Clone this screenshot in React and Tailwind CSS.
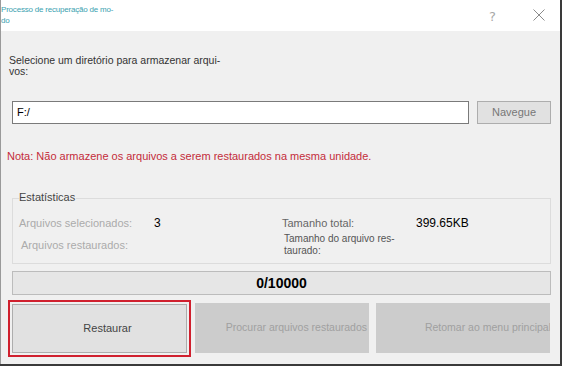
import React from "react";

export default function App() {
  return (
    <div className="w-[562px] h-[366px] bg-[#3a3a3a] font-['Liberation_Sans',Arial,sans-serif]">
      <div className="w-[560px] h-[364px] bg-[#f0f0f0] border-l border-[#9a9a9a] flex flex-col">
        {/* title bar */}
        <div className="h-[31px] bg-white flex items-start relative">
          <div className="pt-[4px] text-[8px] leading-[11px] text-[#3b9fb0] tracking-[-0.2px]">
            <div>Processo de recuperação de mo-</div>
            <div>do</div>
          </div>
          <span className="absolute left-[488px] top-[7px] text-[13px] text-[#a8a8a8] font-['DejaVu_Sans',sans-serif]">?</span>
          <svg className="absolute left-[532px] top-[9px]" width="12" height="12" viewBox="0 0 12 12">
            <path d="M0.5 0.5 L11.5 11.5 M11.5 0.5 L0.5 11.5" stroke="#8a8a8a" strokeWidth="1" fill="none" />
          </svg>
        </div>

        {/* directory */}
        <div className="mt-[24px] pl-[8px] text-[10.5px] leading-[11px] text-[#333]">
          <div>Selecione um diretório para armazenar arqui-</div>
          <div>vos:</div>
        </div>

        <div className="mt-[24px] flex pl-[11px] gap-[8px]">
          <div className="w-[457px] h-[23px] bg-white border border-[#7a7a7a] flex items-center pl-[4px] text-[11px] text-black">
            F:/
          </div>
          <div className="w-[74px] h-[23px] bg-[#e1e1e1] border border-[#adadad] flex items-center justify-center text-[11px] text-[#777]">
            Navegue
          </div>
        </div>

        <div className="mt-[26px] pl-[6px] text-[11px] leading-[12px] text-[#c42c3a]">
          Nota: Não armazene os arquivos a serem restaurados na mesma unidade.
        </div>

        {/* stats group */}
        <div className="mt-[29px] ml-[11px] w-[539px] relative">
          <div className="text-[11px] leading-[12px] text-[#444] pl-[7px] relative z-10">
            <span className="bg-[#f0f0f0] pr-[1px]">Estatísticas</span>
          </div>
          <div className="-mt-[5px] h-[66px] border border-[#dcdcdc] text-[11px]">
            <div className="flex items-center h-[12px] mt-[18px]">
              <span className="w-[141px] pl-[6px] text-[#ababab]">Arquivos selecionados:</span>
              <span className="w-[128px] text-black text-[12px]">3</span>
              <span className="w-[134px] text-[#666]">Tamanho total:</span>
              <span className="text-black text-[12px]">399.65KB</span>
            </div>
            <div className="flex items-center h-[24px] mt-[4px]">
              <span className="w-[271px] pl-[8px] text-[#ababab]">Arquivos restaurados:</span>
              <span className="text-[10px] leading-[12px] text-[#555]">
                <div>Tamanho do arquivo res-</div>
                <div>taurado:</div>
              </span>
            </div>
          </div>
        </div>

        {/* progress */}
        <div className="mt-[7px] ml-[11px] w-[539px] h-[24px] bg-[#e6e6e6] border border-[#bcbcbc] flex items-center justify-center text-[14px] font-bold text-black">
          0/10000
        </div>

        {/* buttons */}
        <div className="mt-[5px] flex ml-[7px]">
          <div className="w-[183px] h-[57px] border-2 border-[#d0202e] p-[2px]">
            <div className="w-full h-full bg-[#e1e1e1] border border-[#adadad] flex items-center justify-center pl-[16px] text-[11px] text-[#444]">
              Restaurar
            </div>
          </div>
          <div className="ml-[4px] mt-[3px] w-[174px] h-[50px] bg-[#cccccc] overflow-hidden flex items-center justify-end pr-[2px] text-[10.5px] text-[#a0a0a0] whitespace-nowrap">
            Procurar arquivos restaurados
          </div>
          <div className="ml-[7px] mt-[3px] w-[174px] h-[50px] bg-[#cccccc] overflow-hidden flex items-center justify-end text-[10.5px] text-[#a0a0a0] whitespace-nowrap">
            <span className="-mr-[1px]">Retomar ao menu principal</span>
          </div>
        </div>
      </div>
    </div>
  );
}
